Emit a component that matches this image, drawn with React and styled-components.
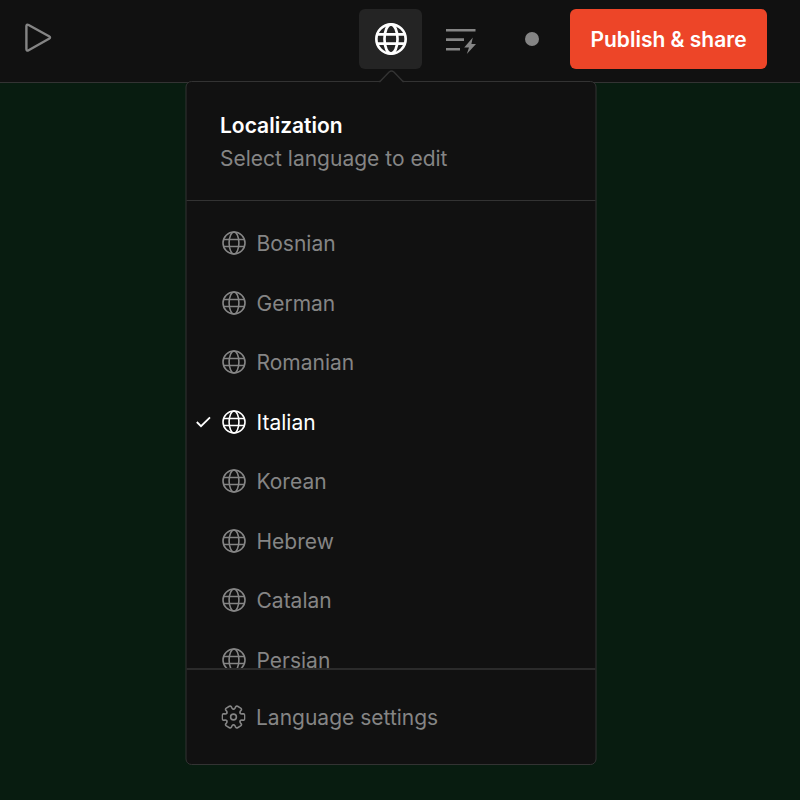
import React, { useState } from "react";

import styled, { createGlobalStyle } from "styled-components";

const GlobalStyle = createGlobalStyle`
  :root {
    --panel: #111111;
    --canvas: #081c10;
    --line: #333333;
    --muted: #858585;
    --accent: #ed4528;
  }
  * {
    box-sizing: border-box;
  }
  body {
    margin: 0;
    min-height: 100vh;
    background: var(--canvas);
    font-family: Inter, "Liberation Sans", sans-serif;
  }
  button {
    font-family: inherit;
    border: none;
    padding: 0;
    background: none;
    cursor: pointer;
  }
`;

const Toolbar = styled.header`
  display: flex;
  align-items: center;
  justify-content: space-between;
  height: 83px;
  padding: 0 33px 5px 22px;
  background: var(--panel);
  border-bottom: 1px solid var(--line);
`;

const Tools = styled.div`
  display: flex;
  align-items: center;
`;

const ToolGroup = styled.div`
  display: flex;
  align-items: center;
  gap: 23px;
  margin-right: 7px;
`;

const IconButton = styled.button`
  display: flex;
  align-items: center;
  justify-content: center;
  width: ${({ $width }) => $width || 32}px;
  height: 60px;
  border-radius: 6px;
  color: ${({ $active }) => ($active ? "#ffffff" : "var(--muted)")};
  background: ${({ $active }) => ($active ? "#242424" : "transparent")};
`;

const MenuAnchor = styled.div`
  position: relative;
`;

const StatusDot = styled.span`
  width: 14px;
  height: 14px;
  border-radius: 50%;
  background: var(--muted);
`;

const PublishButton = styled.button`
  height: 60px;
  width: 197px;
  padding-top: 2px;
  border-radius: 6px;
  color: #ffffff;
  background: var(--accent);
  font-size: 21px;
  font-weight: 600;
  white-space: nowrap;
`;

const Popover = styled.section`
  position: absolute;
  top: 72px;
  left: 50%;
  width: 411px;
  transform: translateX(-50%);
  z-index: 10;
  background: var(--panel);
  border: 1px solid var(--line);
  border-radius: 6px;
`;

const Arrow = styled.svg`
  position: absolute;
  top: -12px;
  left: 50%;
  margin-left: -12px;
`;

const PopoverHeader = styled.div`
  padding: 27px 34px 24px;
  border-bottom: 1px solid var(--line);
`;

const Title = styled.h2`
  margin: 0;
  color: #ffffff;
  font-size: 21px;
  line-height: 33px;
  font-weight: 600;
`;

const Subtitle = styled.p`
  margin: 0;
  color: var(--muted);
  font-size: 21px;
  line-height: 34px;
`;

const Scroller = styled.div`
  height: 467px;
  padding-top: 13px;
  overflow-y: auto;
  scrollbar-width: none;
`;

const LanguageList = styled.ul`
  display: grid;
  grid-auto-rows: 1fr;
  height: 476px;
  margin: 0;
  padding: 0;
  list-style: none;
`;

const MenuItem = styled.button`
  display: flex;
  align-items: center;
  width: 100%;
  height: 100%;
  padding-left: 9px;
  color: ${({ $active }) => ($active ? "#ffffff" : "var(--muted)")};
  font-size: 21px;
  line-height: 30px;
`;

const CheckSlot = styled.span`
  display: flex;
  width: 26px;
`;

const Label = styled.span`
  padding: 2px 0 0 11px;
`;

const PopoverFooter = styled.div`
  height: 96px;
  border-top: 2px solid #2b2b2b;
`;

function GlobeIcon({ size, stroke }) {
  return (
    <svg
      width={size}
      height={size}
      viewBox="0 0 24 24"
      fill="none"
      stroke="currentColor"
      strokeWidth={stroke}
    >
      <circle cx="12" cy="12" r="11" />
      <ellipse cx="12" cy="12" rx="4.9" ry="11" />
      <path d="M1.6 8.5h20.8M1.6 15.5h20.8" />
    </svg>
  );
}

// one tooth, repeated every 60 degrees
const gearTooth =
  "M6.75-3.9Q7.3-2.9 8.6-3.1L10-3.3Q11.3-3 11.3-1.8V1.8Q11.3 3 10 3.3L8.6 3.1Q7.3 2.9 6.75 3.9";

function GearIcon() {
  return (
    <svg
      width="24"
      height="24"
      viewBox="-12 -12 24 24"
      fill="none"
      stroke="currentColor"
      strokeWidth="1.6"
      strokeLinecap="round"
      strokeLinejoin="round"
    >
      <circle r="2.9" />
      {[0, 60, 120, 180, 240, 300].map((angle) => (
        <path key={angle} d={gearTooth} transform={`rotate(${angle})`} />
      ))}
    </svg>
  );
}

function PlayIcon() {
  return (
    <svg
      width="32"
      height="32"
      viewBox="0 0 32 32"
      fill="none"
      stroke="currentColor"
      strokeWidth="2.4"
      strokeLinejoin="round"
    >
      <path d="M4.4 3.2Q4.4.8 6.6 2L27 13.2Q29 14.5 27 15.8L6.6 27.2Q4.4 28.4 4.4 26Z" />
    </svg>
  );
}

function ActionsIcon() {
  return (
    <svg width="30" height="30" viewBox="0 -4 30 30" fill="none">
      <path
        d="M0 2.2h29.5M0 11.6h18M0 21.2h14"
        stroke="currentColor"
        strokeWidth="2.6"
      />
      <path
        d="M26.8 9.6 18.2 19.4h4.8L20.8 26 30 16h-4.6z"
        fill="currentColor"
      />
    </svg>
  );
}

function CheckIcon() {
  return (
    <svg
      width="15"
      height="12"
      viewBox="0 0 15 12"
      fill="none"
      stroke="currentColor"
      strokeWidth="1.8"
    >
      <path d="M.8 6 5 10.2 14 1.4" />
    </svg>
  );
}

const languages = [
  "Bosnian",
  "German",
  "Romanian",
  "Italian",
  "Korean",
  "Hebrew",
  "Catalan",
  "Persian",
];

function LocalizationMenu() {
  const [selected, setSelected] = useState("Italian");

  return (
    <Popover aria-label="Localization">
      <Arrow width="26" height="13" viewBox="0 0 26 13">
        <path
          d="M0 13 1.5 11.5 10.6 2Q13 0 15.4 2L24.5 11.5 26 13Z"
          fill="#111111"
        />
        <path
          d="M0 11.5H1.5L10.6 2Q13 0 15.4 2L24.5 11.5H26"
          fill="none"
          stroke="#333333"
          strokeWidth="1.4"
        />
      </Arrow>
      <PopoverHeader>
        <Title>Localization</Title>
        <Subtitle>Select language to edit</Subtitle>
      </PopoverHeader>
      <Scroller>
        <LanguageList>
          {languages.map((language) => (
            <li key={language}>
              <MenuItem
                $active={language === selected}
                onClick={() => setSelected(language)}
              >
                <CheckSlot>
                  {language === selected ? <CheckIcon /> : null}
                </CheckSlot>
                <GlobeIcon size={24} stroke={1.6} />
                <Label>{language}</Label>
              </MenuItem>
            </li>
          ))}
        </LanguageList>
      </Scroller>
      <PopoverFooter>
        <MenuItem>
          <CheckSlot />
          <GearIcon />
          <Label>Language settings</Label>
        </MenuItem>
      </PopoverFooter>
    </Popover>
  );
}

function App() {
  const [open, setOpen] = useState(true);

  return (
    <>
      <GlobalStyle />
      <Toolbar>
        <IconButton aria-label="Preview">
          <PlayIcon />
        </IconButton>
        <Tools>
          <ToolGroup>
            <MenuAnchor>
              <IconButton
                $active={open}
                $width={63}
                aria-label="Localization"
                aria-expanded={open}
                onClick={() => setOpen(!open)}
              >
                <GlobeIcon size={32} stroke={2} />
              </IconButton>
              {open ? <LocalizationMenu /> : null}
            </MenuAnchor>
            <IconButton aria-label="Actions">
              <ActionsIcon />
            </IconButton>
            <IconButton $width={63} aria-label="Status">
              <StatusDot />
            </IconButton>
          </ToolGroup>
          <PublishButton>Publish &amp; share</PublishButton>
        </Tools>
      </Toolbar>
    </>
  );
}

export default App;
